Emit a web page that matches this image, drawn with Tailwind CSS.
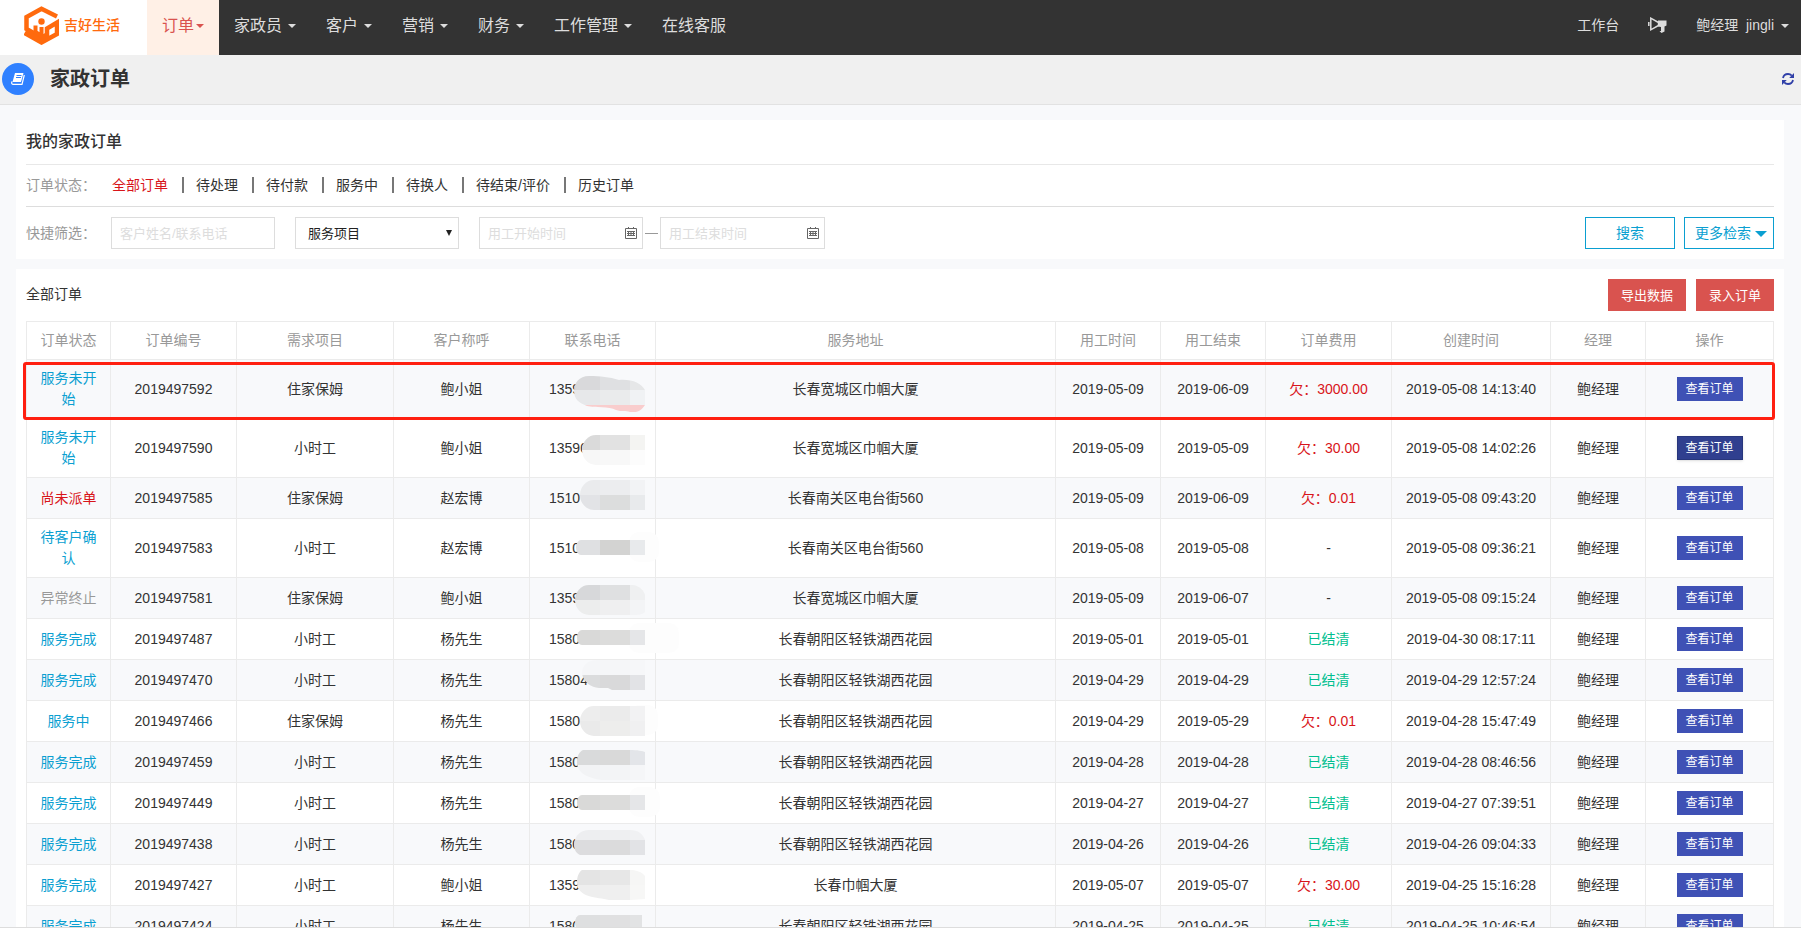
<!DOCTYPE html>
<html lang="zh-CN">
<head>
    <meta charset="UTF-8">
    <meta name="viewport" content="width=device-width, initial-scale=1.0">
    <title>家政订单</title>
    <script src="https://cdn.jsdelivr.net/npm/@tailwindcss/browser@4"></script>
</head>
<body class="h-screen flex flex-col overflow-hidden bg-[#f8f9fb] text-[#333] text-sm leading-[21px] font-['Liberation_Sans','Noto_Sans_CJK_SC',sans-serif]">

    <!-- top nav -->
    <header class="h-[55px] shrink-0 flex bg-[#333] text-[#ddd]">
        <a href="#" class="w-[147px] bg-white flex items-center pl-6 pb-1 gap-[5px] text-[#ff6a0d]">
            <svg class="w-[35px] h-[39px]" viewBox="0 0 35 39" fill="none" stroke="currentColor" stroke-width="4.500">
                <path d="M33 10.500L17.500 2.800L2.500 11V23L17.500 31.500L23 28.500V22.500L33 16.500V28L17.500 36.500L0.500 27"/>
                <path d="M17.500 21V32M11.500 19.500V26L17.500 30" stroke-width="4"/>
                <circle cx="17.500" cy="15.500" r="3.200" fill="currentColor" stroke="none"/>
            </svg>
            <span class="font-medium">吉好生活</span>
        </a>
        <nav class="flex text-base">
            <a href="#" class="flex items-center gap-[2px] px-[15px] pb-1 bg-[#fff0e6] text-[#d9534f]">订单<i class="border-x-4 border-t-4 border-x-transparent border-t-current"></i></a>
            <a href="#" class="flex items-center gap-[6px] px-[15px] pb-1">家政员<i class="border-x-4 border-t-4 border-x-transparent border-t-current"></i></a>
            <a href="#" class="flex items-center gap-[6px] px-[15px] pb-1">客户<i class="border-x-4 border-t-4 border-x-transparent border-t-current"></i></a>
            <a href="#" class="flex items-center gap-[6px] px-[15px] pb-1">营销<i class="border-x-4 border-t-4 border-x-transparent border-t-current"></i></a>
            <a href="#" class="flex items-center gap-[6px] px-[15px] pb-1">财务<i class="border-x-4 border-t-4 border-x-transparent border-t-current"></i></a>
            <a href="#" class="flex items-center gap-[6px] px-[15px] pb-1">工作管理<i class="border-x-4 border-t-4 border-x-transparent border-t-current"></i></a>
            <a href="#" class="flex items-center px-[15px] pb-1">在线客服</a>
        </nav>
        <div class="ml-auto flex items-center gap-[29px] pr-3 pb-1">
            <a href="#">工作台</a>
            <a href="#" aria-label="公告">
                <svg class="w-[19px] h-[17px]" viewBox="0 0 19 17" fill="none" stroke="currentColor" stroke-width="1.500">
                    <path d="M0.800 5V9M2.800 1.200V12.800L10.500 8.500V5.500Z"/>
                    <path d="M10 3.500H18.500V8.500L16.500 9.500V14.500L13.500 16L11.500 14H13V10L10 9.500Z" fill="currentColor" stroke="none"/>
                </svg>
            </a>
            <a href="#" class="flex items-center gap-[7px]">鲍经理&nbsp;&nbsp;jingli<i class="border-x-4 border-t-4 border-x-transparent border-t-current"></i></a>
        </div>
    </header>

    <!-- page title -->
    <div class="h-[50px] shrink-0 flex items-center pl-[2px] pr-[7px] pb-px bg-[#f0f0f0] border-b border-[#e2e2e2]">
        <span class="size-8 rounded-full bg-[#2f80ff] flex items-center justify-center">
            <svg class="w-[14px] h-3" viewBox="0 0 14 12" fill="none" stroke="#fff">
                <path d="M4 0H12.500L10 9H1.500Z" fill="#fff" stroke="none"/>
                <path d="M5.500 2.500H10.500M5 4.500H10" stroke="#2f80ff"/>
                <path d="M13.300 2L11 11.300H2C0.500 11.300 0.400 10 1 8.500" stroke-width="1.200"/>
            </svg>
        </span>
        <h1 class="ml-4 text-xl font-bold">家政订单</h1>
        <button type="button" aria-label="刷新" class="ml-auto text-[#3040a8]">
            <svg class="w-3 h-3" viewBox="0 0 12 12" fill="none" stroke="currentColor" stroke-width="1.800">
                <path d="M1 5C1.500 2.500 3.500 1 6 1C7.500 1 8.800 1.600 9.800 2.600M11 7C10.500 9.500 8.500 11 6 11C4.500 11 3.200 10.400 2.200 9.400"/>
                <path d="M12 0V5H7.200ZM0 12V7H4.800Z" fill="currentColor" stroke="none"/>
            </svg>
        </button>
    </div>

    <main class="flex-1 min-h-0 overflow-hidden pl-4 pt-[15px] pr-[17px]">
        <!-- filters -->
        <section class="bg-white px-[10px] pb-[10px]">
            <h2 class="h-[45px] flex items-center text-base font-medium border-b border-[#e8e8e8]">我的家政订单</h2>
            <div class="h-[42px] flex items-center pb-px border-b border-[#ddd]">
                <span class="w-[86px] text-[#999]">订单状态：</span>
                <a href="#" class="pr-[14px] leading-4 text-[#d8151a]">全部订单</a>
                <a href="#" class="pl-3 pr-[14px] leading-4 border-l-2 border-[#777]"><span class="text-[#333]">待处理</span></a>
                <a href="#" class="pl-3 pr-[14px] leading-4 border-l-2 border-[#777]"><span class="text-[#333]">待付款</span></a>
                <a href="#" class="pl-3 pr-[14px] leading-4 border-l-2 border-[#777]"><span class="text-[#333]">服务中</span></a>
                <a href="#" class="pl-3 pr-[14px] leading-4 border-l-2 border-[#777]"><span class="text-[#333]">待换人</span></a>
                <a href="#" class="pl-3 pr-[14px] leading-4 border-l-2 border-[#777]"><span class="text-[#333]">待结束/评价</span></a>
                <a href="#" class="pl-3 pr-[14px] leading-4 border-l-2 border-[#777]"><span class="text-[#333]">历史订单</span></a>
            </div>
            <form class="flex items-center pt-[10px]">
                <label for="keyword" class="w-[85px] text-[#999]">快捷筛选：</label>
                <input id="keyword" type="text" placeholder="客户姓名/联系电话" class="w-[164px] h-8 px-2 text-[13px] border border-[#ddd] placeholder:text-[#ddd]">
                <div class="relative ml-5">
                    <select aria-label="服务项目" class="appearance-none w-[164px] h-8 pl-3 text-[13px] text-[#222] border border-[#ddd]">
                        <option>服务项目</option>
                    </select>
                    <i class="absolute right-[7px] top-[13px] border-x-3 border-t-[6px] border-x-transparent border-t-[#222]"></i>
                </div>
                <div class="relative ml-5">
                    <input type="text" aria-label="用工开始时间" placeholder="用工开始时间" class="w-[164px] h-8 px-2 text-[13px] border border-[#ddd] placeholder:text-[#ddd]">
                    <svg class="absolute right-[6px] top-[10px] w-3 h-3" viewBox="0 0 12 12" fill="none" stroke="#666">
                        <path d="M0.500 1.500H11.500V11.500H0.500ZM3.500 0V2M8.500 0V2M2 4.500H10M2 6.500H10M2 8.500H10M3.500 4V9M6 4V9M8.500 4V9"/>
                    </svg>
                </div>
                <i class="mx-[2px] w-[13px] h-px bg-[#999]"></i>
                <div class="relative">
                    <input type="text" aria-label="用工结束时间" placeholder="用工结束时间" class="w-[165px] h-8 px-2 text-[13px] border border-[#ddd] placeholder:text-[#ddd]">
                    <svg class="absolute right-[6px] top-[10px] w-3 h-3" viewBox="0 0 12 12" fill="none" stroke="#666">
                        <path d="M0.500 1.500H11.500V11.500H0.500ZM3.500 0V2M8.500 0V2M2 4.500H10M2 6.500H10M2 8.500H10M3.500 4V9M6 4V9M8.500 4V9"/>
                    </svg>
                </div>
                <button type="button" class="ml-auto w-[90px] h-8 pt-px border border-[#0a9fd1] text-[#0a9fd1]">搜索</button>
                <button type="button" class="ml-[9px] w-[90px] h-8 pt-px pr-[6px] flex items-center justify-end gap-1 border border-[#0a9fd1] text-[#0a9fd1]">更多检索<i class="border-x-[6px] border-t-[6px] border-x-transparent border-t-current"></i></button>
            </form>
        </section>

        <!-- order list -->
        <section class="mt-[10px] bg-white p-[10px]">
            <div class="flex items-start gap-[10px] mb-[10px]">
                <h3 class="mr-auto pt-[5px]">全部订单</h3>
                <button type="button" class="w-[78px] h-8 bg-[#d9534f] text-white text-[13px]">导出数据</button>
                <button type="button" class="w-[78px] h-8 bg-[#d9534f] text-white text-[13px]">录入订单</button>
            </div>
            <table class="w-full table-fixed border-collapse text-center [&_td]:border [&_td]:border-[#ebebeb] [&_td]:p-2 [&_th]:border [&_th]:border-[#ebebeb] [&_th]:py-2">
                <colgroup>
                    <col class="w-[84px]">
                    <col class="w-[126px]">
                    <col class="w-[157px]">
                    <col class="w-[136px]">
                    <col class="w-[126px]">
                    <col>
                    <col class="w-[105px]">
                    <col class="w-[105px]">
                    <col class="w-[126px]">
                    <col class="w-[159px]">
                    <col class="w-[95px]">
                    <col class="w-[128px]">
                </colgroup>
                <thead class="text-[#999]">
                    <tr>
                        <th class="font-normal">订单状态</th>
                        <th class="font-normal">订单编号</th>
                        <th class="font-normal">需求项目</th>
                        <th class="font-normal">客户称呼</th>
                        <th class="font-normal">联系电话</th>
                        <th class="font-normal">服务地址</th>
                        <th class="font-normal">用工时间</th>
                        <th class="font-normal">用工结束</th>
                        <th class="font-normal">订单费用</th>
                        <th class="font-normal">创建时间</th>
                        <th class="font-normal">经理</th>
                        <th class="font-normal">操作</th>
                    </tr>
                </thead>
                <tbody id="orders"></tbody>
            </table>
        </section>
    </main>
    <footer class="h-1 shrink-0 bg-white border-t border-[#ddd]"></footer>

    <script>
        const BLUE = 'text-[#0a9fd1]';
        const RED = 'text-[#d8151a]';
        const GRAY = 'text-[#999]';
        const GREEN = 'text-[#00bf8f]';

        // mask: left edge, right edge, then bands of [top, height, three colours]
        const orders = [
            { status: '服务未开始', color: BLUE, no: '2019497592', type: '住家保姆', name: '鲍小姐', tel: '1359', addr: '长春宽城区巾帼大厦', start: '2019-05-09', end: '2019-06-09', fee: '欠：3000.00', time: '2019-05-08 14:13:40', marked: true,
              mask: [45, 116, [[17, 14, '#d9d9db', '#dfe0e2', '#e6e7e8'], [31, 15, '#e7e8ea', '#eaebec', '#f0f2f4'], [46, 7, '#f9cdcd', '#f9cdcd', '#f9cdcd']]],
              outline: 'M45 32C45 24 50 17 60 17C72 17 80 18 90 21C103 20 112 24 116 31V46C112 52 108 54 101 53C97 51 92 53 87 51C80 47 66 49 58 47C50 44 45 40 45 32Z' },
            { status: '服务未开始', color: BLUE, no: '2019497590', type: '小时工', name: '鲍小姐', tel: '13590', addr: '长春宽城区巾帼大厦', start: '2019-05-09', end: '2019-05-09', fee: '欠：30.00', time: '2019-05-08 14:02:26', active: true,
              mask: [53, 116, [[17, 15, '#dadada', '#e2e2e2', '#f4f4f2'], [32, 15, '#f7f7f7', '#f8f8f8', '#fcfcfc']]] },
            { status: '尚未派单', color: RED, no: '2019497585', type: '住家保姆', name: '赵宏博', tel: '1510', addr: '长春南关区电台街560', start: '2019-05-09', end: '2019-06-09', fee: '欠：0.01', time: '2019-05-08 09:43:20',
              mask: [51, 116, [[12, 15, '#eaebed', '#ecedef', '#f2f3f5'], [27, 15, '#e2e3e6', '#dcdddd', '#e8eaec']]] },
            { status: '待客户确认', color: BLUE, no: '2019497583', type: '小时工', name: '赵宏博', tel: '1510', addr: '长春南关区电台街560', start: '2019-05-08', end: '2019-05-08', fee: '-', time: '2019-05-08 09:36:21',
              mask: [47, 116, [[22, 15, '#dfe0e2', '#d3d3d2', '#e8eaec']]], halo: 130 },
            { status: '异常终止', color: GRAY, no: '2019497581', type: '住家保姆', name: '鲍小姐', tel: '1359', addr: '长春宽城区巾帼大厦', start: '2019-05-09', end: '2019-06-07', fee: '-', time: '2019-05-08 09:15:24',
              mask: [46, 116, [[17, 15, '#d7d8da', '#dfe0e1', '#eff0f1'], [32, 15, '#eceded', '#efeff0', '#f3f4f6']]],
              outline: 'M60 17H104C111 18 115 23 116 27V44C113 47 108 47 104 47H60A14 15 0 0 1 60 17' },
            { status: '服务完成', color: BLUE, no: '2019497487', type: '小时工', name: '杨先生', tel: '1580', addr: '长春朝阳区轻铁湖西花园', start: '2019-05-01', end: '2019-05-01', fee: '已结清', time: '2019-04-30 08:17:11',
              mask: [48, 116, [[21, 15, '#d9d9d8', '#dcdcdb', '#e5e6e8']]], halo: 150 },
            { status: '服务完成', color: BLUE, no: '2019497470', type: '小时工', name: '杨先生', tel: '15804', addr: '长春朝阳区轻铁湖西花园', start: '2019-04-29', end: '2019-04-29', fee: '已结清', time: '2019-04-29 12:57:24',
              mask: [53, 116, [[10, 15, '#f5f6f8', '#f5f6f8', '#f6f7f9'], [25, 15, '#dbdcdd', '#d9d9da', '#e2e3e6']]],
              outline: 'M53 24C53 15 59 10 68 10H116V40H83L79 38H70C62 37 55 33 53 24Z' },
            { status: '服务中', color: BLUE, no: '2019497466', type: '住家保姆', name: '杨先生', tel: '1580', addr: '长春朝阳区轻铁湖西花园', start: '2019-04-29', end: '2019-05-29', fee: '欠：0.01', time: '2019-04-28 15:47:49',
              mask: [51, 116, [[15, 15, '#ededed', '#ebebeb', '#f2f2f3'], [30, 15, '#eaeaea', '#ededec', '#f0f0f1']]], halo: 129 },
            { status: '服务完成', color: BLUE, no: '2019497459', type: '小时工', name: '杨先生', tel: '1580', addr: '长春朝阳区轻铁湖西花园', start: '2019-04-28', end: '2019-04-28', fee: '已结清', time: '2019-04-28 08:46:56',
              mask: [48, 116, [[18, 15, '#d9dadb', '#d9d9d9', '#e3e5e9'], [33, 15, '#f2f3f5', '#f3f4f6', '#f5f6f8']]],
              outline: 'M48 30C48 24 50 20 54 18H101C108 18 114 19 116 20V48H72C60 46 48 42 48 30Z' },
            { status: '服务完成', color: BLUE, no: '2019497449', type: '小时工', name: '杨先生', tel: '1580', addr: '长春朝阳区轻铁湖西花园', start: '2019-04-27', end: '2019-04-27', fee: '已结清', time: '2019-04-27 07:39:51',
              mask: [48, 116, [[22, 15, '#d9d9d8', '#dcdcdb', '#e5e6e8']]], halo: 131 },
            { status: '服务完成', color: BLUE, no: '2019497438', type: '小时工', name: '杨先生', tel: '1580', addr: '长春朝阳区轻铁湖西花园', start: '2019-04-26', end: '2019-04-26', fee: '已结清', time: '2019-04-26 09:04:33',
              mask: [45, 116, [[16, 10, '#edeef0', '#eeeff1', '#f0f1f3'], [26, 15, '#dcdcde', '#dbdbdc', '#e2e3e6']]],
              outline: 'M45 30C46 21 52 16 60 16H101C109 16 114 20 116 26V41H51C47 39 45 36 45 30Z' },
            { status: '服务完成', color: BLUE, no: '2019497427', type: '小时工', name: '鲍小姐', tel: '1359', addr: '长春巾帼大厦', start: '2019-05-07', end: '2019-05-07', fee: '欠：30.00', time: '2019-04-25 15:16:28',
              mask: [48, 116, [[15, 15, '#e4e4e4', '#e7e7e7', '#f6f6f5'], [30, 15, '#eeeeee', '#efefef', '#f7f7f6']]],
              outline: 'M48 28C48 21 50 17 53 15H104C110 16 114 18 116 21V44L101 45H80C68 42 49 43 48 28Z' },
            { status: '服务完成', color: BLUE, no: '2019497424', type: '小时工', name: '杨先生', tel: '1580', addr: '长春朝阳区轻铁湖西花园', start: '2019-04-25', end: '2019-04-25', fee: '已结清', time: '2019-04-25 10:46:54',
              mask: [46, 113, [[19, 15, '#dedfe0', '#e0e0e1', '#e2e3e4']]] }
        ];

        function maskSvg(o, i) {
            const [x0, x1, bands] = o.mask;
            const top = bands[0][0];
            const last = bands[bands.length - 1];
            const height = last[0] + last[1] - top;
            const r = bands.length > 1 ? 14 : 5;
            const outline = o.outline || `M${x0 + r} ${top}H${x1}V${top + height}H${x0 + r}A${r} ${height / 2} 0 0 1 ${x0 + r} ${top}`;
            const rects = bands.map(([y, h, a, b, c]) =>
                `<path fill="${a}" d="M${x0} ${y}H71V${y + h}H${x0}Z"/>` +
                `<path fill="${b}" d="M71 ${y}H101V${y + h}H71Z"/>` +
                `<path fill="${c}" d="M101 ${y}H${x1}V${y + h}H101Z"/>`).join('');
            const halo = o.halo ? `<rect x="100" y="14" width="${o.halo - 100}" height="30" rx="10" fill="#fdfdfd"/>` : '';
            return `<svg class="absolute z-10 -left-px top-1/2 -translate-y-1/2 w-40 h-[60px]" viewBox="0 0 160 60" aria-hidden="true">
                <clipPath id="mask${i}"><path d="${outline}"/></clipPath>
                ${halo}<g clip-path="url(#mask${i})">${rects}</g></svg>`;
        }

        function feeColor(fee) {
            if (fee === '已结清') return GREEN;
            return fee === '-' ? '' : RED;
        }

        document.getElementById('orders').innerHTML = orders.map((o, i) => `
            <tr class="relative ${i % 2 ? 'bg-white' : 'bg-[#f8f9fb]'}">
                <td class="${o.color}">${o.status}${o.marked ? '<i class="absolute z-20 -left-1 -right-px top-[2px] -bottom-px border-3 border-[#ff1f10] rounded-[3px]"></i>' : ''}</td>
                <td>${o.no}</td>
                <td>${o.type}</td>
                <td>${o.name}</td>
                <td class="relative text-left"><span class="pl-[11px]">${o.tel}</span>${maskSvg(o, i)}</td>
                <td>${o.addr}</td>
                <td>${o.start}</td>
                <td>${o.end}</td>
                <td class="${feeColor(o.fee)}">${o.fee}</td>
                <td>${o.time}</td>
                <td>鲍经理</td>
                <td><button type="button" class="block mx-auto w-[66px] h-6 text-xs text-white ${o.active ? 'bg-[#303f8f] border border-[#28367c] shadow-sm' : 'bg-[#3f51b5]'}">查看订单</button></td>
            </tr>`).join('');
    </script>
</body>
</html>
